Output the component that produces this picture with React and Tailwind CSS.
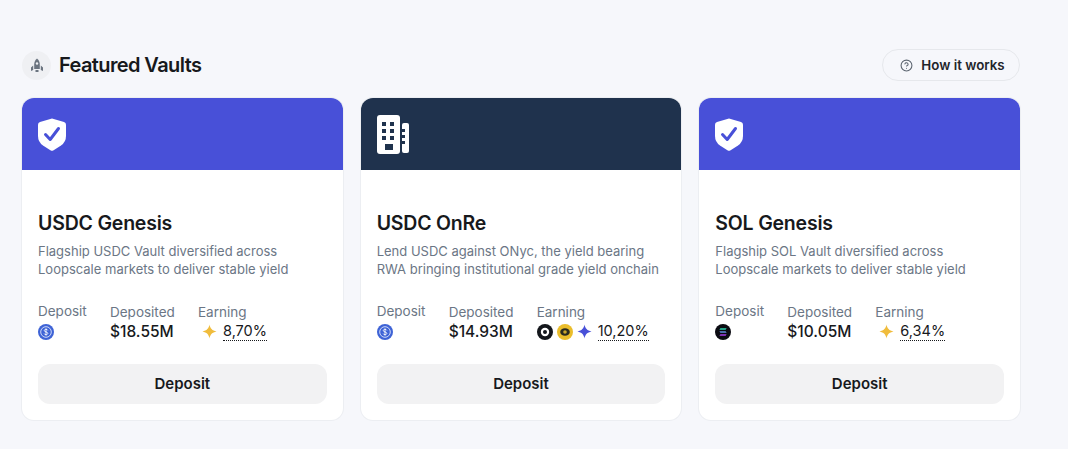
import { CircleHelp } from 'lucide-react';

const font = { fontFamily: 'Inter, "Liberation Sans", sans-serif' };

const ShieldIcon = () => (
  <svg width="28" height="33" viewBox="0 0 28 33">
    <path d="M14 0.5 L26 4 Q28 4.6 28 6.6 V18 Q28 24 23 27.5 L15.2 32.4 Q14 33 12.8 32.4 L5 27.5 Q0 24 0 18 V6.6 Q0 4.6 2 4 Z" fill="#fff" />
    <path d="M7.5 16.5 L12.2 21.5 L20.5 10.5" fill="none" stroke="#4850d8" strokeWidth="3" strokeLinecap="round" strokeLinejoin="round" />
  </svg>
);

const BuildingIcon = () => (
  <svg width="32" height="39" viewBox="0 0 32 39">
    <rect x="0" y="0" width="23" height="39" rx="3" fill="#fff" />
    <rect x="25" y="8" width="7" height="30" rx="2" fill="#fff" />
    <g fill="#1f324d">
      <rect x="5" y="7" width="4" height="4" /><rect x="13" y="7" width="4" height="4" />
      <rect x="5" y="14" width="4" height="4" /><rect x="13" y="14" width="4" height="4" />
      <rect x="5" y="21" width="4" height="4" /><rect x="13" y="21" width="4" height="4" />
      <rect x="8" y="29" width="8" height="6" />
      <rect x="25" y="14" width="3" height="3" /><rect x="25" y="20" width="3" height="3" /><rect x="25" y="26" width="3" height="3" />
    </g>
  </svg>
);

const RocketIcon = () => (
  <svg width="14" height="15" viewBox="0 0 14 15" fill="#6b7480">
    <path d="M7 0.5 C9 2 9.8 4.2 9.8 6.5 V11 H4.2 V6.5 C4.2 4.2 5 2 7 0.5 Z" />
    <circle cx="7" cy="5.5" r="1.2" fill="#f0f1f4" />
    <path d="M3.2 7.5 V12 L1 13 V9.5 Z M10.8 7.5 V12 L13 13 V9.5 Z M5.5 12 H8.5 V14 H5.5 Z" />
  </svg>
);

const UsdcIcon = () => (
  <svg width="16" height="16" viewBox="0 0 16 16">
    <circle cx="8" cy="8" r="8" fill="#3e63d6" />
    <circle cx="8" cy="8" r="5.3" fill="none" stroke="#dfe6fa" strokeWidth="0.9" />
    <path d="M9.8 6.4 C9.5 5.6 8.8 5.3 8 5.3 C7 5.3 6.3 5.8 6.3 6.6 C6.3 8.4 9.8 7.5 9.8 9.4 C9.8 10.2 9 10.7 8 10.7 C7.1 10.7 6.4 10.3 6.2 9.6 M8 4.5 V11.5" fill="none" stroke="#fff" strokeWidth="0.9" />
  </svg>
);

const SolIcon = () => (
  <svg width="16" height="16" viewBox="0 0 16 16">
    <circle cx="8" cy="8" r="8" fill="#0b0b12" />
    <path d="M5.4 4.3 H11.6 L10.6 5.7 H4.4 Z" fill="#2fd9b0" />
    <path d="M4.4 7.3 H10.6 L11.6 8.7 H5.4 Z" fill="#5f8fe0" />
    <path d="M5.4 10.3 H11.6 L10.6 11.7 H4.4 Z" fill="#a63fe8" />
  </svg>
);

const Sparkle = ({ color }) => (
  <svg width="15" height="15" viewBox="0 0 15 15">
    <path d="M7.5 0.5 C8.2 4.4 10.2 6.6 14.5 7.5 C10.2 8.4 8.2 10.6 7.5 14.5 C6.8 10.6 4.8 8.4 0.5 7.5 C4.8 6.6 6.8 4.4 7.5 0.5 Z" fill={color} />
  </svg>
);

const RingToken = () => (
  <svg width="16" height="16" viewBox="0 0 16 16">
    <circle cx="8" cy="8" r="8" fill="#14171c" />
    <circle cx="8" cy="8" r="4.2" fill="#fff" />
    <circle cx="8" cy="8" r="2" fill="#14171c" />
  </svg>
);

const GoldToken = () => (
  <svg width="16" height="16" viewBox="0 0 16 16">
    <circle cx="8" cy="8" r="8" fill="#eabd2b" />
    <ellipse cx="8" cy="8" rx="4.8" ry="3.8" fill="#2a2a1e" />
    <circle cx="8" cy="8" r="1.8" fill="#c9a52a" />
  </svg>
);

const vaults = [
  {
    name: 'USDC Genesis',
    desc: ['Flagship USDC Vault diversified across', 'Loopscale markets to deliver stable yield'],
    deposited: '$18.55M',
    earning: '8,70%',
    head: 'bg-[#4850d8]',
    icon: <ShieldIcon />,
    token: <UsdcIcon />,
    rewards: <div className="ml-1"><Sparkle color="#f0bc3c" /></div>,
  },
  {
    name: 'USDC OnRe',
    desc: ['Lend USDC against ONyc, the yield bearing', 'RWA bringing institutional grade yield onchain'],
    deposited: '$14.93M',
    earning: '10,20%',
    head: 'bg-[#1f324d]',
    icon: <BuildingIcon />,
    token: <UsdcIcon />,
    rewards: (
      <>
        <RingToken />
        <GoldToken />
        <Sparkle color="#4850d8" />
      </>
    ),
  },
  {
    name: 'SOL Genesis',
    desc: ['Flagship SOL Vault diversified across', 'Loopscale markets to deliver stable yield'],
    deposited: '$10.05M',
    earning: '6,34%',
    head: 'bg-[#4850d8]',
    icon: <ShieldIcon />,
    token: <SolIcon />,
    rewards: <div className="ml-1"><Sparkle color="#f0bc3c" /></div>,
  },
];

const VaultCard = ({ vault }) => (
  <div className="flex h-[322px] flex-col overflow-hidden rounded-[12px] bg-white ring-1 ring-[#eceef2]">
    <div className={`flex h-[72px] items-center px-4 ${vault.head}`}>{vault.icon}</div>
    <div className="flex flex-1 flex-col px-4">
      <h3 className="mt-[41px] text-[19.5px] leading-[24px] font-semibold tracking-[-0.2px] text-[#17191c]">{vault.name}</h3>
      <p className="mt-[7px] text-[13px] leading-[18px] whitespace-nowrap text-[#6b7685]">
        {vault.desc[0]}
        <br />
        {vault.desc[1]}
      </p>
      <div className="mt-[24px] flex text-[13.5px]">
        <div className="w-[72px]">
          <div className="h-[18px] leading-[18px] text-[#6b7685]">Deposit</div>
          <div className="mt-[4px] flex">{vault.token}</div>
        </div>
        <div className="w-[88px] pt-[1px]">
          <div className="leading-[18px] text-[#6b7685]">Deposited</div>
          <div className="mt-[1px] text-[15.5px] leading-[20px] font-medium text-[#17191c]">{vault.deposited}</div>
        </div>
        <div className="pt-[1px]">
          <div className="leading-[18px] text-[#6b7685]">Earning</div>
          <div className="mt-[1px] flex items-center">
            <div className="flex items-center gap-1">{vault.rewards}</div>
            <span className="ml-[6px] border-b border-dotted border-[#17191c] text-[14.5px] leading-[18px] text-[#17191c]">{vault.earning}</span>
          </div>
        </div>
      </div>
      <button className="mt-[22px] h-[40px] rounded-[12px] bg-[#f2f2f3] pt-[1px] text-[15px] font-semibold text-[#17191c]">Deposit</button>
    </div>
  </div>
);

const App = () => {
  return (
    <div className="h-[449px] w-[1068px] overflow-hidden bg-[#f6f7fb] pt-[49px] pr-[48px] pl-[22px]" style={font}>
      <div className="flex h-[49px] items-start justify-between">
        <div className="flex items-center gap-[8px] pt-[1px]">
          <div className="flex h-[29px] w-[29px] items-center justify-center rounded-full bg-[#eff0f3]">
            <RocketIcon />
          </div>
          <h2 className="text-[20px] leading-[30px] font-semibold tracking-[-0.6px] text-[#17191c]">Featured Vaults</h2>
        </div>
        <button className="flex h-[32px] w-[138px] items-center justify-center gap-[8px] rounded-full border border-[#e6e8ec] pt-[1px] pl-[3px] text-[13.3px] font-semibold text-[#22252a]">
          <CircleHelp size={13} color="#5c6570" />
          How it works
        </button>
      </div>
      <div className="grid grid-cols-3 gap-[18px]">
        {vaults.map((vault) => (
          <VaultCard key={vault.name} vault={vault} />
        ))}
      </div>
    </div>
  );
};

export default App;
